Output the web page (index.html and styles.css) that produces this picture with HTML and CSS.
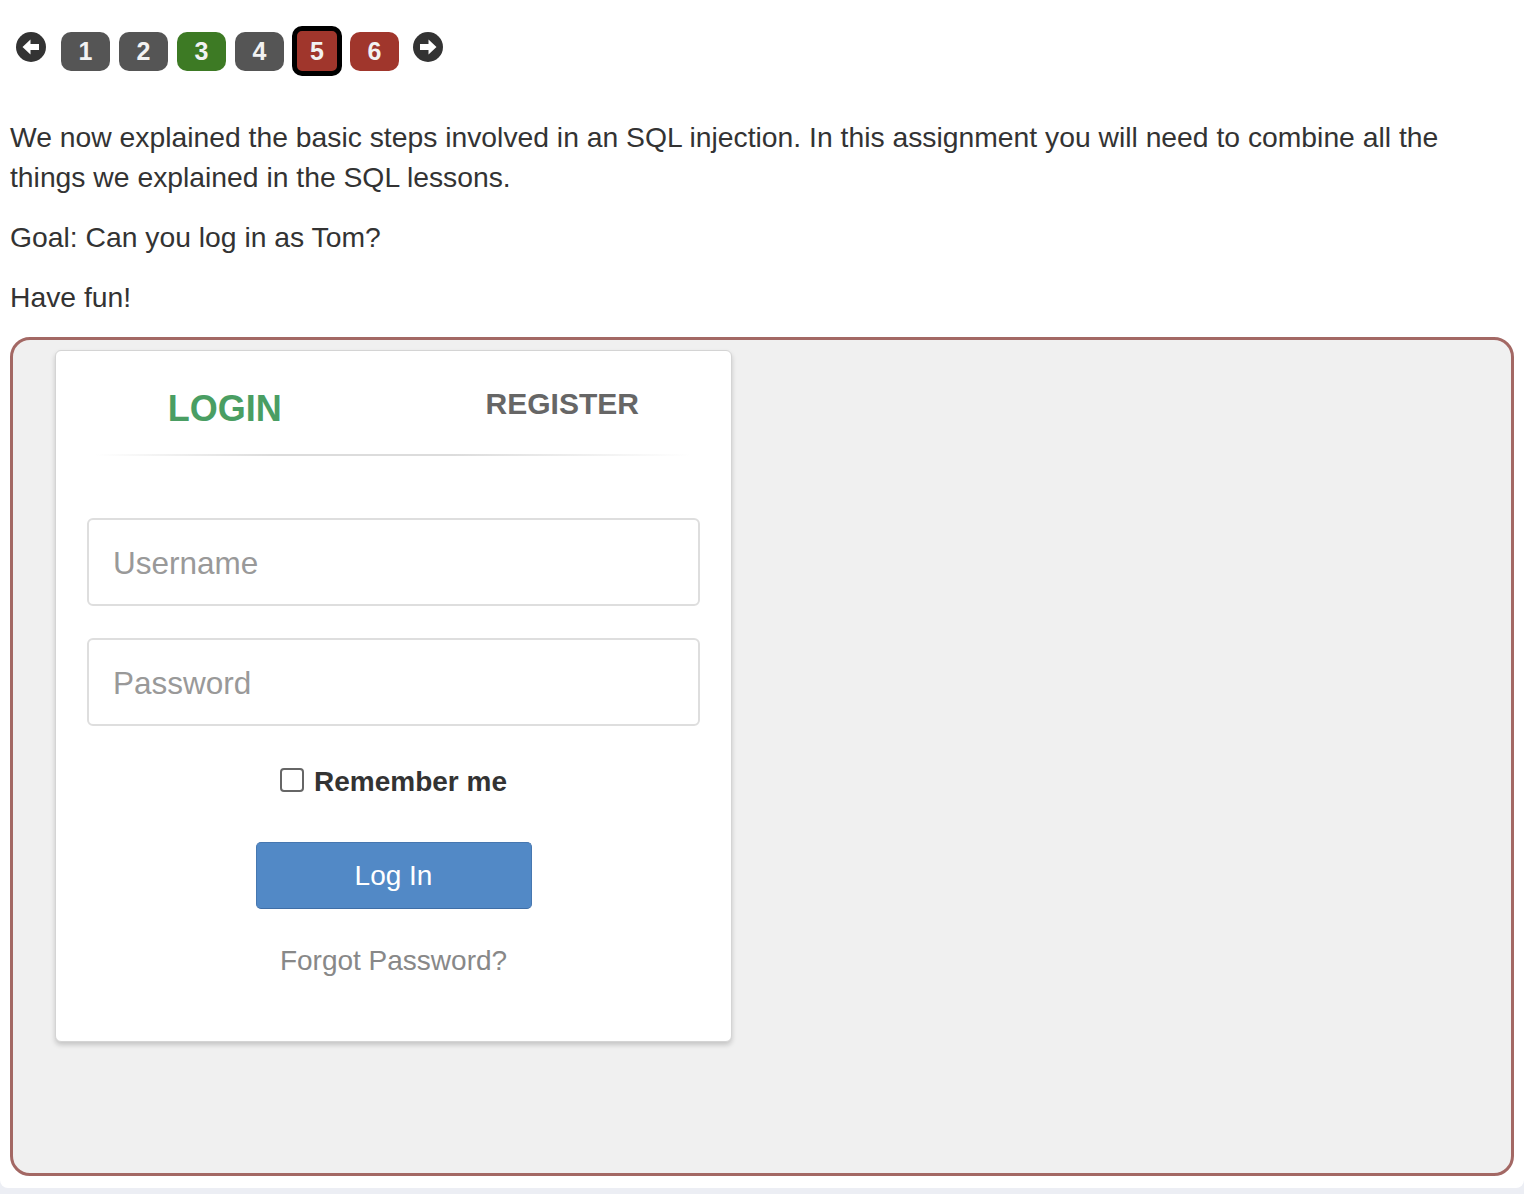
FILE: index.html
```html
<!DOCTYPE html>
<html>
<head>
<meta charset="utf-8">
<link rel="stylesheet" href="styles.css">
</head>
<body>
<div class="page">
  <nav class="pager">
    <span class="arrow">
      <svg viewBox="0 0 30 30" width="30" height="30"><circle cx="15" cy="15" r="15" fill="#333"/><path d="M6.5 15 L14.5 7.5 L14.5 12 L23 12 L23 18 L14.5 18 L14.5 22.5 Z" fill="#fff"/></svg>
    </span>
    <span class="pg gray">1</span>
    <span class="pg gray">2</span>
    <span class="pg green">3</span>
    <span class="pg gray">4</span>
    <span class="pg red active">5</span>
    <span class="pg red">6</span>
    <span class="arrow">
      <svg viewBox="0 0 30 30" width="30" height="30"><circle cx="15" cy="15" r="15" fill="#333"/><path d="M23.5 15 L15.5 7.5 L15.5 12 L7 12 L7 18 L15.5 18 L15.5 22.5 Z" fill="#fff"/></svg>
    </span>
  </nav>

  <p class="txt">We now explained the basic steps involved in an SQL injection. In this assignment you will need to combine all the things we explained in the SQL lessons.</p>
  <p class="txt">Goal: Can you log in as Tom?</p>
  <p class="txt">Have fun!</p>

  <div class="attack">
    <div class="card">
      <div class="tabs">
        <div class="tab tab-login">LOGIN</div>
        <div class="tab tab-register">REGISTER</div>
      </div>
      <div class="form">
        <div class="field"><span class="ph">Username</span></div>
        <div class="field field-2"><span class="ph">Password</span></div>
        <div class="remember"><span class="box"></span><span class="rlabel">Remember me</span></div>
        <div class="btnrow"><span class="btn">Log In</span></div>
        <div class="forgot">Forgot Password?</div>
      </div>
    </div>
  </div>
</div>
</body>
</html>
```
FILE: styles.css
```css
html, body {
  margin: 0;
  padding: 0;
}
body {
  background: #eceef4;
  font-family: "Liberation Sans", Arial, sans-serif;
  color: #333;
}
.page {
  background: #fff;
  height: 1188px;
  box-sizing: border-box;
  padding: 26px 10px 0 10px;
  border-radius: 0 0 8px 8px;
}
.pager {
  display: flex;
  align-items: center;
  height: 50px;
  margin-left: 6px;
  gap: 9px;
}
.arrow {
  display: block;
  width: 30px;
  height: 30px;
  align-self: flex-start;
  margin-top: 6px;
}
.arrow svg { display: block; }
.arrow:first-child { margin-right: 6px; }
.arrow:last-child { margin-left: 5px; }
.pg {
  width: 49px;
  height: 39px;
  border-radius: 10px;
  color: #f2f2f2;
  font-weight: bold;
  font-size: 25px;
  display: flex;
  align-items: center;
  justify-content: center;
  box-sizing: border-box;
}
.gray { background: #555; }
.green { background: #3d7a24; }
.red { background: #a0362c; }
.active {
  width: 50px;
  height: 50px;
  border: 5px solid #000;
  border-radius: 10px;
  margin: 0 -1px 0 -1px;
}
.txt {
  margin: 0 0 20px 0;
  font-size: 28.3px;
  line-height: 40px;
  color: #333;
}
.pager + .txt { margin-top: 41px; }
.attack {
  margin-top: 0;
  border: 3px solid #a36864;
  border-radius: 20px;
  background: #f0f0f0;
  padding: 10px 0 131px 42px;
}
.card {
  width: 677px;
  box-sizing: border-box;
  background: #fff;
  border: 1px solid #d4d4d4;
  border-radius: 6px;
  box-shadow: 0 3px 5px rgba(0, 0, 0, 0.18);
  padding: 0 31px 63px 31px;
}
.tabs {
  display: grid;
  grid-template-columns: 1fr 1fr;
  margin: 0 -31px;
  height: 105px;
  box-sizing: border-box;
  position: relative;
}
.tabs::after {
  content: "";
  position: absolute;
  left: 40px;
  right: 40px;
  bottom: 0;
  height: 2px;
  background: linear-gradient(to right, rgba(220,220,220,0), #dcdcdc 30%, #dcdcdc 60%, rgba(220,220,220,0));
}
.tab {
  text-align: center;
  font-weight: bold;
}
.tab-login {
  color: #4a9e63;
  font-size: 36px;
  line-height: 40px;
  padding-top: 38px;
}
.tab-register {
  color: #666;
  font-size: 30px;
  line-height: 34px;
  padding-top: 36px;
}
.form {
  padding-top: 62px;
}
.field {
  height: 88px;
  box-sizing: border-box;
  border: 2px solid #dedede;
  border-radius: 6px;
  display: flex;
  align-items: center;
  padding: 3px 0 0 24px;
}
.field-2 { margin-top: 32px; }
.ph {
  font-size: 31.5px;
  color: #999;
}
.remember {
  margin-top: 42px;
  display: flex;
  justify-content: center;
  align-items: flex-start;
  gap: 10px;
}
.box {
  width: 24px;
  height: 24px;
  box-sizing: border-box;
  border: 2px solid #666;
  border-radius: 4px;
  background: #fff;
}
.rlabel {
  font-weight: bold;
  font-size: 28px;
  line-height: 28px;
  color: #333;
}
.btnrow {
  margin-top: 46px;
  display: flex;
  justify-content: center;
}
.btn {
  width: 276px;
  height: 67px;
  box-sizing: border-box;
  background: #5289c6;
  border: 1px solid #4677b0;
  border-bottom-color: #3f6ea6;
  border-radius: 5px;
  color: #fff;
  font-size: 28px;
  display: flex;
  align-items: center;
  justify-content: center;
}
.forgot {
  margin-top: 35px;
  text-align: center;
  font-size: 28px;
  line-height: 34px;
  color: #888;
}
```
